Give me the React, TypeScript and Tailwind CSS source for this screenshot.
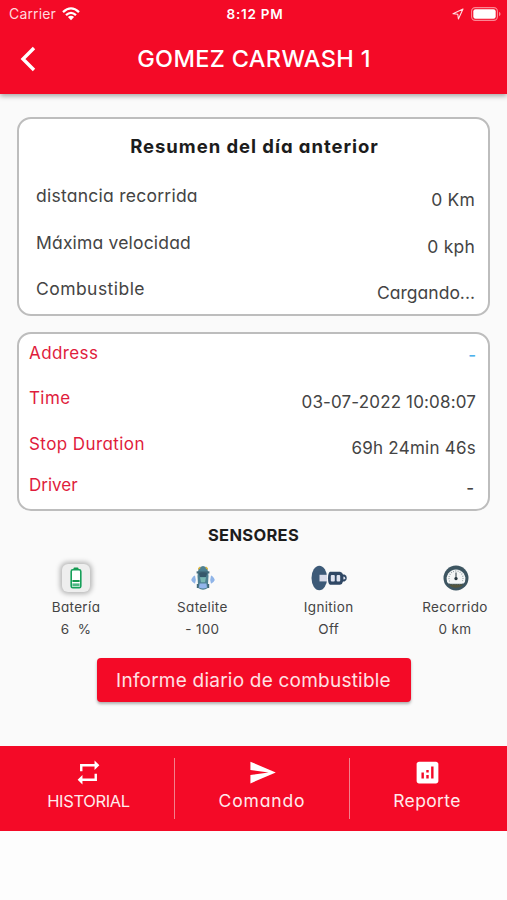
import { MdAnalytics, MdRepeat, MdSend } from "react-icons/md";

const resumen = [
  { label: "distancia recorrida", value: "0 Km", labelCls: "tracking-[0.25px]", valueCls: "tracking-[0.2px]" },
  { label: "Máxima velocidad", value: "0 kph", labelCls: "tracking-[0.18px]", valueCls: "tracking-[0.2px]" },
  { label: "Combustible", value: "Cargando...", labelCls: "tracking-[0.45px]", valueCls: "tracking-[0px]" },
];

const detalle = [
  { label: "Address", value: "-", rowCls: "h-[45px]", labelCls: "tracking-[0.4px]", valueCls: "text-[#4db1ec] pt-[2px] font-medium" },
  { label: "Time", value: "03-07-2022 10:08:07", rowCls: "h-[46px]", labelCls: "tracking-[0.4px]", valueCls: "pt-1 tracking-[0.15px]" },
  { label: "Stop Duration", value: "69h 24min 46s", rowCls: "h-[41px]", labelCls: "tracking-[0.42px]", valueCls: "pt-1 tracking-[0.25px]" },
  { label: "Driver", value: "-", rowCls: "h-[24px]", labelCls: "tracking-[0px]", valueCls: "pt-[3px] pr-[2px] font-medium" },
];

function BatteryIcon() {
  return (
    <div className="flex size-7 items-center justify-center rounded-md bg-[#eeeeee] shadow-[0_0_5px_2px_rgba(0,0,0,0.28)]">
      <svg width="12" height="22" viewBox="0 0 12 22">
        <rect x="3.5" y="0.5" width="5" height="3" rx="1" fill="#16964e" />
        <rect x="1.2" y="2.8" width="9.6" height="18" rx="1.6" fill="#fff" stroke="#16a05a" strokeWidth="1.6" />
        <rect x="2.4" y="13" width="7.2" height="2" fill="#16964e" />
        <rect x="2.4" y="16.4" width="7.2" height="3" fill="#4fb783" />
      </svg>
    </div>
  );
}

function SateliteIcon() {
  return (
    <svg width="26" height="26" viewBox="0 0 26 26" className="ml-[2px]">
      <path d="M5 10.5Q2.6 11 1.2 15Q2.6 18 5 18.8Q6.5 14.5 5 10.5ZM21 10.5Q23.4 11 24.8 15Q23.4 18 21 18.8Q19.5 14.5 21 10.5Z" fill="#8fb4e8" />
      <path d="M8.5 3.5Q13-1.5 17.5 3.5L18.5 11L17.8 23Q13 26.6 8.2 23L7.5 11Z" fill="#4d8092" />
      <path d="M8.2 3L10 1.4L10.6 3L8 5ZM17.8 3L16 1.4L15.4 3L18 5Z" fill="#e0b63a" />
      <path d="M6.6 6.3h12.8v2.2H6.6z" fill="#41697a" />
      <path d="M8.8 8.5Q13 5.8 17.2 8.5L16 12H10Z" fill="#36586b" />
      <path d="M10 12.3H16L15 17.3H11Z" fill="#79b7b2" />
      <path d="M9.6 18.6H16.4L17 22.5Q13 24.5 9 22.5Z" fill="#93b5ec" />
      <path d="M6.8 19h1.8v4H6.8zM17.4 19h1.8v4h-1.8z" fill="#41697a" />
    </svg>
  );
}

function IgnitionIcon() {
  return (
    <svg width="36" height="26" viewBox="0 0 36 26">
      <ellipse cx="8.3" cy="13" rx="7.8" ry="12.2" fill="#3d5a78" />
      <path d="M8.5 9.8H16v6.6H8.5z" fill="#d9dbea" />
      <path d="M19 6.8H29Q31.5 7.2 32 9.6H33.5Q35.8 10.2 35.8 13Q35.8 15.9 33.5 16.4H32Q31.5 19.2 29 19.8H19Q17 18.8 17 13.3Q17 7.8 19 6.8Z" fill="#2f4764" />
      <rect x="19.8" y="10" width="4" height="6.6" rx="1" fill="#dfe3f0" />
      <rect x="25.6" y="10" width="3.6" height="6.6" rx="1" fill="#dfe3f0" />
      <path d="M32.4 11.6Q34.3 11.8 34.2 13.2Q34 14.4 32.4 14.5Z" fill="#dfe3f0" />
    </svg>
  );
}

function GaugeIcon() {
  return (
    <svg width="26" height="26" viewBox="0 0 26 26" className="ml-[2px]">
      <circle cx="13" cy="13" r="12.5" fill="#3d5561" />
      <path d="M4 16.5A9.4 9.4 0 1 1 22 16.5Q21.5 18 20.6 18.5H5.4Q4.5 18 4 16.5Z" fill="#f4f6f6" />
      <circle cx="13" cy="13" r="7" fill="none" stroke="#8c999e" strokeWidth="1.3" strokeDasharray="0.8 1.5" />
      <path d="M6.8 14.6h12.4v4H6.8z" fill="#f4f6f6" />
      <path d="M6 19.6H20Q17.3 22.8 13 22.8T6 19.6Z" fill="#54553b" />
      <path d="M12.5 7.5h1V12a1.7 1.7 0 1 1-1 0Z" fill="#28373f" />
    </svg>
  );
}

const sensores = [
  { name: "Batería", value: "6  %", icon: <BatteryIcon /> },
  { name: "Satelite", value: "- 100", icon: <SateliteIcon /> },
  { name: "Ignition", value: "Off", icon: <IgnitionIcon /> },
  { name: "Recorrido", value: "0 km", icon: <GaugeIcon /> },
];

export default function App() {
  return (
    <div className="h-[900px] w-[507px] overflow-hidden bg-[#fafafa] font-['Inter',sans-serif] text-[#444444] [font-feature-settings:'cv11']">
      <header className="h-[94px] bg-[#f40a27] text-white shadow-[0_2px_5px_rgba(0,0,0,0.35)]">
        {/* Barra de estado */}
        <div className="grid h-7 grid-cols-3 items-center pr-[6px] pl-[9px] text-[13.5px] leading-7 [font-feature-settings:normal]">
          <div className="flex items-center gap-[6px] text-[#ffd9dd]">
            <span className="text-[14px] tracking-[0.15px]">Carrier</span>
            <svg width="18" height="14" viewBox="0 0 18 14" fill="none" stroke="#fff" strokeWidth="2.3">
              <path d="M1 5.2Q9-2.4 17 5.2M4 8.2Q9 3.6 14 8.2" />
              <path d="M5.9 10.1Q9 7.6 12.1 10.1L9 13.3Z" fill="#fff" stroke="none" />
            </svg>
          </div>
          <span className="text-center font-semibold tracking-[0.75px]">8:12 PM</span>
          <div className="flex items-center justify-end gap-[7px]">
            <svg width="12" height="12" viewBox="0 0 12 12" fill="none" stroke="#ffdfe2" strokeWidth="1.1" strokeLinejoin="round">
              <path d="M11 1L1 5.8L5.8 6.3L6.4 11Z" />
            </svg>
            <svg width="30" height="14" viewBox="0 0 30 14">
              <rect x="0.6" y="0.6" width="25.8" height="12.8" rx="3.6" fill="none" stroke="#fb8793" strokeWidth="1.1" />
              <rect x="2.3" y="2.3" width="22.4" height="9.4" rx="2.2" fill="#fff" />
              <path d="M28 4.8Q29.6 5.5 29.6 7T28 9.2Z" fill="#fb8793" />
            </svg>
          </div>
        </div>
        <div className="flex h-[61px] items-center pl-5">
          <svg width="16" height="26" viewBox="0 0 16 26" fill="none" stroke="#fff" strokeWidth="3.4">
            <path d="M14 2L3 13L14 24" />
          </svg>
          <h1 className="flex-1 pr-[35px] text-center text-[23.5px] font-medium tracking-[0.35px] whitespace-nowrap">GOMEZ CARWASH 1</h1>
        </div>
      </header>

      <main>
        <section className="mx-[17px] mt-[23px] h-[199px] rounded-[14px] border-2 border-[#bdbdbd] bg-white pr-[13px] pl-[17px]">
          <h2 className="pr-[2px] pt-[15px] text-center text-[18.5px] leading-6 font-bold tracking-[0.95px] text-[#1c1c1c]">Resumen del día anterior</h2>
          <div className="mt-[15px] text-[17.5px] leading-6">
            {resumen.map((r) => (
              <div key={r.label} className="flex h-[46.5px] items-start justify-between pt-[11px]">
                <span className={r.labelCls}>{r.label}</span>
                <span className={`pt-1 ${r.valueCls}`}>{r.value}</span>
              </div>
            ))}
          </div>
        </section>

        <section className="mx-[17px] mt-4 h-[179px] rounded-[14px] border-2 border-[#bdbdbd] bg-white pt-[7px] pr-3 pl-[10px] text-[17px] leading-6">
          {detalle.map((d) => (
            <div key={d.label} className={`flex items-start justify-between ${d.rowCls}`}>
              <span className={`text-[#e01c3c] ${d.labelCls}`}>{d.label}</span>
              <span className={d.valueCls}>{d.value}</span>
            </div>
          ))}
        </section>

        <h3 className="mt-3 text-center text-[16.5px] leading-6 font-bold tracking-[0.3px] text-[#1c1c1c]">SENSORES</h3>

        <div className="mt-4 flex justify-between pr-[18px] pl-[42px] text-[13.5px] leading-[22px] tracking-[0.35px]">
          {sensores.map((s) => (
            <div key={s.name} className="flex w-[68px] flex-col items-center whitespace-pre">
              <div className="mb-[3px] flex h-[30px] items-center">{s.icon}</div>
              <span>{s.name}</span>
              <span>{s.value}</span>
            </div>
          ))}
        </div>

        <button className="mx-auto mt-[18px] block h-11 w-[314px] rounded-[4px] bg-[#f40a27] pt-[2px] text-[19px] tracking-[0.22px] text-[#ffe0e3] shadow-[0_2px_3px_rgba(0,0,0,0.3)] [font-feature-settings:normal]">
          Informe diario de combustible
        </button>
      </main>

      <nav className="mt-11 grid h-[85px] grid-cols-[174px_1px_174px_1px_157px] items-center bg-[#f40a27] text-[17.5px] leading-6 text-[#ffeaec]">
        <div className="-mt-[6px] flex flex-col items-center gap-[2px] pl-[3px]">
          <MdRepeat size={29} className="text-white" />
          <span className="text-[16.5px] tracking-[-0.35px]">HISTORIAL</span>
        </div>
        <div className="h-[61px] bg-[#f3808c]" />
        <div className="-mt-[6px] flex flex-col items-center gap-[2px]">
          <MdSend size={29} className="text-white" />
          <span className="tracking-[0.85px]">Comando</span>
        </div>
        <div className="h-[61px] bg-[#f3808c]" />
        <div className="-mt-[6px] flex flex-col items-center gap-[2px] pr-[3px]">
          <MdAnalytics size={29} className="text-white" />
          <span className="tracking-[0.35px]">Reporte</span>
        </div>
      </nav>
      <div className="h-[69px] bg-[#fdfdfd]" />
    </div>
  );
}
